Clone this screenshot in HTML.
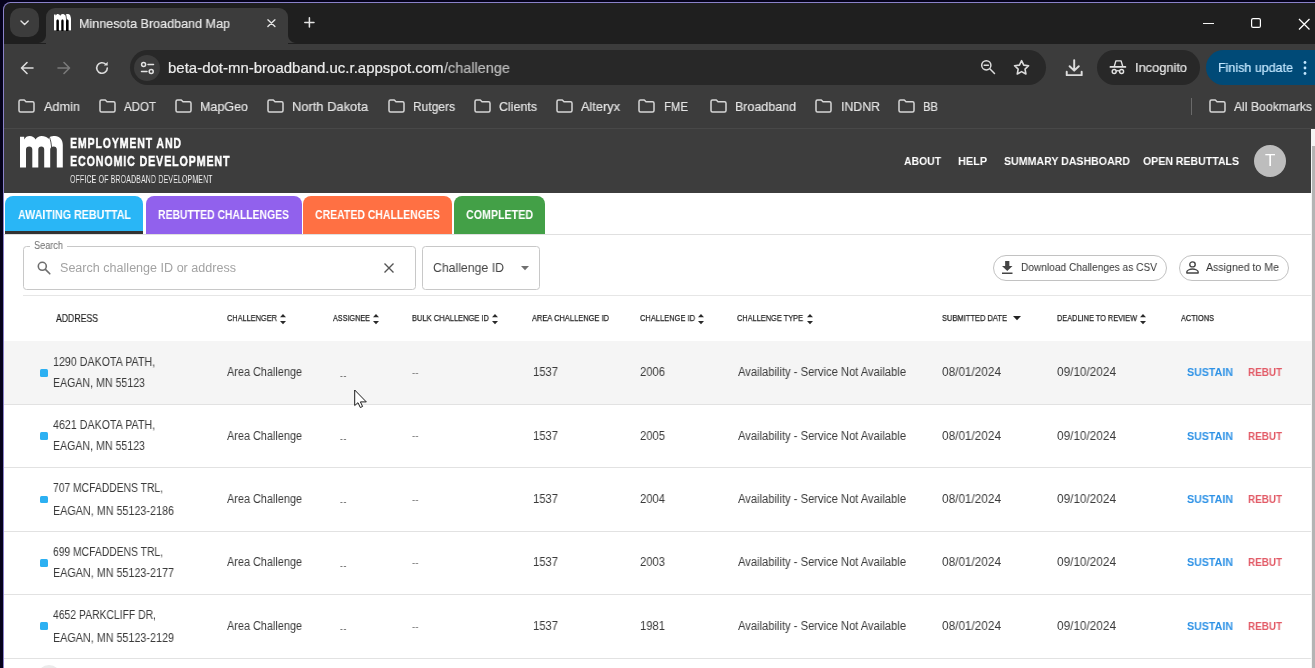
<!DOCTYPE html>
<html><head><meta charset="utf-8"><title>Minnesota Broadband Map</title>
<style>
html,body{margin:0;padding:0;}
body{width:1315px;height:668px;overflow:hidden;position:relative;background:#05021c;font-family:"Liberation Sans", sans-serif;}
.t{position:absolute;white-space:pre;transform-origin:0 50%;font-family:"Liberation Sans", sans-serif;will-change:transform;}
.a{position:absolute;}
svg{position:absolute;overflow:visible;}
</style></head><body>
<div class="a" style="left:3px;top:2px;width:1320px;height:700px;background:#8a82ca;border-radius:7.500px 0 0 0;"></div>
<div class="a" style="left:4px;top:3px;width:1320px;height:700px;background:#1f1f1f;border-radius:6.500px 0 0 0;"></div>
<div class="a" style="left:10px;top:8px;width:29px;height:29px;background:#3c3c3c;border-radius:10px;"></div>
<svg style="left:20.200px;top:20px" width="9.200" height="5.900" viewBox="0 0 11 7"><path d="M1.2 1.2 L5.5 5.3 L9.8 1.2" fill="none" stroke="#e3e3e3" stroke-width="1.7" stroke-linecap="round" stroke-linejoin="round"/></svg>
<div class="a" style="left:46px;top:8px;width:242px;height:36px;background:#3c3c3c;border-radius:9px 9px 0 0;"></div>
<div class="a" style="left:4px;top:43.5px;width:1320px;height:85px;background:#3c3c3c;"></div>
<div class="a" style="left:54px;top:16px;width:17px;height:15px;background:#000;"></div>
<svg style="left:54px;top:14px" width="17" height="16.5" viewBox="0 0 42.800 31.400" preserveAspectRatio="none"><path d="M0 31.400V.8H4.200V3.400C5.400 1.200 7.300 0 9.700 0C12.300 0 14.400 1.300 15.600 3.600C16.800 1.300 19 0 21.700 0C24.500 0 26.800 1 28.500 2.800L29.800 1C31 .3 33 0 35 0C39.500 0 42.800 3.500 42.800 9V31.400H36.800V13.600C36.800 11.600 35.600 10.400 33.600 10.400C31.600 10.400 30.200 11.600 30.200 13.600V31.400H24.200V13.600C24.200 11.600 23.200 10.400 21.300 10.400C19.400 10.400 18.300 11.600 18.300 13.600V31.400H12.300V13.600C12.300 11.600 11.200 10.400 9.200 10.400C7.200 10.400 6 11.600 6 13.600V31.400Z" fill="#fff"/><path d="M29.500 1.200C30.600 4 31.400 8 31.600 11.800" fill="none" stroke="#000" stroke-width="1.400"/></svg>
<div class="a" style="left:38px;top:35px;width:8px;height:8px;background:radial-gradient(circle at 0 0, rgba(60,60,60,0) 7.500px, #3c3c3c 8.500px);"></div>
<div class="a" style="left:288px;top:35px;width:8px;height:8px;background:radial-gradient(circle at 100% 0, rgba(60,60,60,0) 7.500px, #3c3c3c 8.500px);"></div>
<svg style="left:267.400px;top:18.700px" width="8.800" height="8.400" viewBox="0 0 10 10" preserveAspectRatio="none"><path d="M1 1L9 9M9 1L1 9" stroke="#e3e3e3" stroke-width="1.600" stroke-linecap="round"/></svg>
<svg style="left:304px;top:17.400px" width="10.800" height="10.800" viewBox="0 0 12 12"><path d="M6 .9V11.100M.9 6H11.100" stroke="#e3e3e3" stroke-width="1.700" stroke-linecap="round"/></svg>
<div class="a" style="left:1203px;top:23px;width:11px;height:1.2px;background:#f4f4f4;"></div>
<svg style="left:1251px;top:18.400px" width="10" height="10" viewBox="0 0 10 10"><rect x=".6" y=".6" width="8.8" height="8.8" rx="1.5" fill="none" stroke="#fff" stroke-width="1.2"/></svg>
<svg style="left:1299px;top:18.500px" width="10.500" height="10.500" viewBox="0 0 10 10"><path d="M0 0L10 10M10 0L0 10" stroke="#fff" stroke-width="1.2"/></svg>
<svg style="left:20px;top:61px" width="14" height="14" viewBox="0 0 14 14"><path d="M13 7H1.800M7 1.500L1.500 7L7 12.500" fill="none" stroke="#dcdcdc" stroke-width="1.600" stroke-linecap="round" stroke-linejoin="round"/></svg>
<svg style="left:57px;top:61px" width="14" height="14" viewBox="0 0 14 14"><path d="M1 7H12.200M7 1.500L12.500 7L7 12.500" fill="none" stroke="#7a7a7a" stroke-width="1.600" stroke-linecap="round" stroke-linejoin="round"/></svg>
<svg style="left:95px;top:61px" width="14" height="14" viewBox="0 0 14 14"><path d="M12.300 7A5.300 5.300 0 1 1 10.700 3.200" fill="none" stroke="#dcdcdc" stroke-width="1.600" stroke-linecap="round"/><path d="M12.700 .8V4.600H8.900z" fill="#dcdcdc"/></svg>
<div class="a" style="left:130px;top:50px;width:916px;height:35px;background:#282828;border-radius:17.5px;"></div>
<div class="a" style="left:134.4px;top:55px;width:25.6px;height:25.6px;background:#3c3c3c;border-radius:13px;"></div>
<svg style="left:139.600px;top:61px" width="15" height="14" viewBox="0 0 15 14"><g fill="none" stroke="#e3e3e3" stroke-width="1.500" stroke-linecap="round"><circle cx="3.600" cy="3.500" r="2"/><path d="M8 3.500H13.500"/><circle cx="11.200" cy="10.500" r="2"/><path d="M1.500 10.500H7"/></g></svg>
<svg style="left:980px;top:59.200px" width="16" height="16" viewBox="0 0 16 16"><g fill="none" stroke="#dcdcdc" stroke-width="1.500" stroke-linecap="round"><circle cx="6.300" cy="6.300" r="4.600"/><path d="M9.800 9.800L14.500 14.500M4.200 6.300H8.400"/></g></svg>
<svg style="left:1012.200px;top:57.600px" width="19.200" height="19.200" viewBox="0 0 24 24"><path d="M12 3.300l2.700 5.600 6.100 .8-4.500 4.200 1.100 6.100L12 17l-5.400 3 1.100-6.100L3.200 9.700l6.100-.8z" fill="none" stroke="#dcdcdc" stroke-width="2" stroke-linejoin="round"/></svg>
<svg style="left:1064.800px;top:58.600px" width="18.400" height="17.800" viewBox="0 0 16 16" preserveAspectRatio="none"><g fill="none" stroke="#dcdcdc" stroke-width="1.700" stroke-linecap="round" stroke-linejoin="round"><path d="M8 1V10M4 6.500L8 10.500L12 6.500M1.500 11.500V14.500H14.500V11.500"/></g></svg>
<div class="a" style="left:1097px;top:50px;width:103px;height:35px;background:#282828;border-radius:17.5px;"></div>
<svg style="left:1109px;top:59px" width="18" height="17" viewBox="0 0 18 17"><g fill="none" stroke="#e3e3e3" stroke-linecap="round" stroke-linejoin="round"><path d="M1.400 7.900H16.400" stroke-width="1.700"/><path d="M5.300 7.400L6.900 1.900H12.100L13.700 7.400" stroke-width="1.400"/><circle cx="5.200" cy="12.500" r="2" stroke-width="1.400"/><circle cx="12.600" cy="12.500" r="2" stroke-width="1.400"/><path d="M7.200 12.100Q8.900 11.300 10.600 12.100" stroke-width="1.200"/></g></svg>
<div class="a" style="left:1206px;top:50px;width:130px;height:35px;background:#004a77;border-radius:17.5px;"></div>
<svg style="left:1303px;top:60px" width="4" height="16" viewBox="0 0 4 16"><g fill="#c2e7ff"><circle cx="2" cy="2.500" r="1.400"/><circle cx="2" cy="8" r="1.400"/><circle cx="2" cy="13.500" r="1.400"/></g></svg>
<svg style="left:18.3px;top:99px" width="17" height="14" viewBox="0 0 17 14"><path d="M1 2.500Q1 1 2.500 1H6.300L8 2.800H14.500Q16 2.800 16 4.300V11.500Q16 13 14.500 13H2.500Q1 13 1 11.500Z" fill="none" stroke="#d6d6d6" stroke-width="1.500" stroke-linejoin="round"/></svg>
<svg style="left:99px;top:99px" width="17" height="14" viewBox="0 0 17 14"><path d="M1 2.500Q1 1 2.500 1H6.300L8 2.800H14.500Q16 2.800 16 4.300V11.500Q16 13 14.500 13H2.500Q1 13 1 11.500Z" fill="none" stroke="#d6d6d6" stroke-width="1.500" stroke-linejoin="round"/></svg>
<svg style="left:175px;top:99px" width="17" height="14" viewBox="0 0 17 14"><path d="M1 2.500Q1 1 2.500 1H6.300L8 2.800H14.500Q16 2.800 16 4.300V11.500Q16 13 14.500 13H2.500Q1 13 1 11.500Z" fill="none" stroke="#d6d6d6" stroke-width="1.500" stroke-linejoin="round"/></svg>
<svg style="left:267px;top:99px" width="17" height="14" viewBox="0 0 17 14"><path d="M1 2.500Q1 1 2.500 1H6.300L8 2.800H14.500Q16 2.800 16 4.300V11.500Q16 13 14.500 13H2.500Q1 13 1 11.500Z" fill="none" stroke="#d6d6d6" stroke-width="1.500" stroke-linejoin="round"/></svg>
<svg style="left:388px;top:99px" width="17" height="14" viewBox="0 0 17 14"><path d="M1 2.500Q1 1 2.500 1H6.300L8 2.800H14.500Q16 2.800 16 4.300V11.500Q16 13 14.500 13H2.500Q1 13 1 11.500Z" fill="none" stroke="#d6d6d6" stroke-width="1.500" stroke-linejoin="round"/></svg>
<svg style="left:474px;top:99px" width="17" height="14" viewBox="0 0 17 14"><path d="M1 2.500Q1 1 2.500 1H6.300L8 2.800H14.500Q16 2.800 16 4.300V11.500Q16 13 14.500 13H2.500Q1 13 1 11.500Z" fill="none" stroke="#d6d6d6" stroke-width="1.500" stroke-linejoin="round"/></svg>
<svg style="left:556px;top:99px" width="17" height="14" viewBox="0 0 17 14"><path d="M1 2.500Q1 1 2.500 1H6.300L8 2.800H14.500Q16 2.800 16 4.300V11.500Q16 13 14.500 13H2.500Q1 13 1 11.500Z" fill="none" stroke="#d6d6d6" stroke-width="1.500" stroke-linejoin="round"/></svg>
<svg style="left:638px;top:99px" width="17" height="14" viewBox="0 0 17 14"><path d="M1 2.500Q1 1 2.500 1H6.300L8 2.800H14.500Q16 2.800 16 4.300V11.500Q16 13 14.500 13H2.500Q1 13 1 11.500Z" fill="none" stroke="#d6d6d6" stroke-width="1.500" stroke-linejoin="round"/></svg>
<svg style="left:710px;top:99px" width="17" height="14" viewBox="0 0 17 14"><path d="M1 2.500Q1 1 2.500 1H6.300L8 2.800H14.500Q16 2.800 16 4.300V11.500Q16 13 14.500 13H2.500Q1 13 1 11.500Z" fill="none" stroke="#d6d6d6" stroke-width="1.500" stroke-linejoin="round"/></svg>
<svg style="left:815px;top:99px" width="17" height="14" viewBox="0 0 17 14"><path d="M1 2.500Q1 1 2.500 1H6.300L8 2.800H14.500Q16 2.800 16 4.300V11.500Q16 13 14.500 13H2.500Q1 13 1 11.500Z" fill="none" stroke="#d6d6d6" stroke-width="1.500" stroke-linejoin="round"/></svg>
<svg style="left:898px;top:99px" width="17" height="14" viewBox="0 0 17 14"><path d="M1 2.500Q1 1 2.500 1H6.300L8 2.800H14.500Q16 2.800 16 4.300V11.500Q16 13 14.500 13H2.500Q1 13 1 11.500Z" fill="none" stroke="#d6d6d6" stroke-width="1.500" stroke-linejoin="round"/></svg>
<svg style="left:1209px;top:99px" width="17" height="14" viewBox="0 0 17 14"><path d="M1 2.500Q1 1 2.500 1H6.300L8 2.800H14.500Q16 2.800 16 4.300V11.500Q16 13 14.500 13H2.500Q1 13 1 11.500Z" fill="none" stroke="#d6d6d6" stroke-width="1.500" stroke-linejoin="round"/></svg>
<div class="a" style="left:1190.5px;top:98px;width:1px;height:16.5px;background:#6a6a6a;"></div>
<div class="a" style="left:4px;top:128px;width:1320px;height:1px;background:#484848;"></div>
<div class="a" style="left:4px;top:129px;width:1307px;height:600px;background:#fff;"></div>
<div class="a" style="left:4px;top:129px;width:1307px;height:64px;background:#3d3d3d;"></div>
<div class="a" style="left:1311px;top:129px;width:4px;height:600px;background:#f4f4f4;"></div>
<div class="a" style="left:1312px;top:146px;width:4px;height:600px;background:#b4b4b4;"></div>
<svg style="left:20px;top:136.300px" width="42.800" height="31.400" viewBox="0 0 42.800 31.400"><path d="M0 31.400V.8H4.200V3.400C5.400 1.200 7.300 0 9.700 0C12.300 0 14.400 1.300 15.600 3.600C16.800 1.300 19 0 21.700 0C24.500 0 26.800 1 28.500 2.800L29.800 1C31 .3 33 0 35 0C39.500 0 42.800 3.500 42.800 9V31.400H36.800V13.600C36.800 11.600 35.600 10.400 33.600 10.400C31.600 10.400 30.200 11.600 30.200 13.600V31.400H24.200V13.600C24.200 11.600 23.200 10.400 21.300 10.400C19.400 10.400 18.300 11.600 18.300 13.600V31.400H12.300V13.600C12.300 11.600 11.200 10.400 9.200 10.400C7.200 10.400 6 11.600 6 13.600V31.400Z" fill="#fff"/><path d="M29.500 1.200C30.600 4 31.400 8 31.600 11.800" fill="none" stroke="#3d3d3d" stroke-width=".9"/></svg>
<div class="a" style="left:1254px;top:145.3px;width:32px;height:32px;background:#bdbdbd;border-radius:16px;"></div>
<div class="a" style="left:4px;top:234px;width:1307px;height:1px;background:#e0e0e0;"></div>
<div class="a" style="left:5px;top:196px;width:138px;height:38px;background:#29b6f6;border-radius:8px 8px 0 0;"></div>
<div class="a" style="left:5px;top:231px;width:138px;height:3px;background:#333;"></div>
<div class="a" style="left:146px;top:196px;width:156px;height:38px;background:#9161ed;border-radius:8px 8px 0 0;"></div>
<div class="a" style="left:303px;top:196px;width:149px;height:38px;background:#ff7043;border-radius:8px 8px 0 0;"></div>
<div class="a" style="left:454px;top:196px;width:91px;height:38px;background:#43a047;border-radius:8px 8px 0 0;"></div>
<div class="a" style="left:23px;top:246px;width:393px;height:44px;border:1px solid #c8c8c8;border-radius:3.5px;box-sizing:border-box;"></div>
<div class="a" style="left:30px;top:244px;width:37px;height:5px;background:#fff;"></div>
<svg style="left:37px;top:261px" width="14" height="14" viewBox="0 0 14 14"><g fill="none" stroke="#6e6e6e" stroke-width="1.600" stroke-linecap="round"><circle cx="5.300" cy="5.300" r="4"/><path d="M8.400 8.400L12.800 12.800"/></g></svg>
<svg style="left:384px;top:263px" width="10" height="10" viewBox="0 0 10 10"><path d="M.5 .5L9.500 9.500M9.500 .5L.5 9.500" stroke="#555" stroke-width="1.400"/></svg>
<div class="a" style="left:422px;top:246px;width:118px;height:44px;border:1px solid #c8c8c8;border-radius:3.5px;box-sizing:border-box;"></div>
<svg style="left:521px;top:265.800px" width="8" height="4.200" viewBox="0 0 9 5" preserveAspectRatio="none"><path d="M0 0H9L4.500 5z" fill="#707070"/></svg>
<div class="a" style="left:993px;top:255px;width:174px;height:26px;border:1px solid #c2c2c2;border-radius:13px;box-sizing:border-box;"></div>
<svg style="left:1002px;top:260.500px" width="10.500" height="13" viewBox="0 0 10 12" preserveAspectRatio="none"><path d="M3 0H7V4.500H10L5 9.200L0 4.500H3zM0 10.500H10V12H0z" fill="#444"/></svg>
<div class="a" style="left:1179px;top:255px;width:110px;height:26px;border:1px solid #c2c2c2;border-radius:13px;box-sizing:border-box;"></div>
<svg style="left:1185.800px;top:261.400px" width="13" height="13" viewBox="0 0 12 13" preserveAspectRatio="none"><g fill="none" stroke="#444" stroke-width="1.300"><circle cx="6" cy="3.400" r="2.500"/><path d="M.8 12V10.800C.8 9 4 8 6 8s5.200 1 5.200 2.800V12z" stroke-linejoin="round"/></g></svg>
<div class="a" style="left:23px;top:295px;width:1288px;height:1px;background:#e6e6e6;"></div>
<svg style="left:280px;top:313.6px" width="6" height="10.200" viewBox="0 0 6 10.200"><path d="M0 3.300L3 0L6 3.300zM0 7.100L3 10.200L6 7.100z" fill="#2a2a2a"/></svg>
<svg style="left:373px;top:313.6px" width="6" height="10.200" viewBox="0 0 6 10.200"><path d="M0 3.300L3 0L6 3.300zM0 7.100L3 10.200L6 7.100z" fill="#2a2a2a"/></svg>
<svg style="left:492px;top:313.6px" width="6" height="10.200" viewBox="0 0 6 10.200"><path d="M0 3.300L3 0L6 3.300zM0 7.100L3 10.200L6 7.100z" fill="#2a2a2a"/></svg>
<svg style="left:698px;top:313.6px" width="6" height="10.200" viewBox="0 0 6 10.200"><path d="M0 3.300L3 0L6 3.300zM0 7.100L3 10.200L6 7.100z" fill="#2a2a2a"/></svg>
<svg style="left:807.3px;top:313.6px" width="6" height="10.200" viewBox="0 0 6 10.200"><path d="M0 3.300L3 0L6 3.300zM0 7.100L3 10.200L6 7.100z" fill="#2a2a2a"/></svg>
<svg style="left:1140px;top:313.6px" width="6" height="10.200" viewBox="0 0 6 10.200"><path d="M0 3.300L3 0L6 3.300zM0 7.100L3 10.200L6 7.100z" fill="#2a2a2a"/></svg>
<svg style="left:1012.500px;top:316.200px" width="8" height="4.200" viewBox="0 0 9 5" preserveAspectRatio="none"><path d="M0 0H9L4.500 5z" fill="#222"/></svg>
<div class="a" style="left:4px;top:341px;width:1307px;height:63px;background:#f5f5f5;"></div>
<div class="a" style="left:4px;top:404px;width:1307px;height:1px;background:#e2e2e2;"></div>
<div class="a" style="left:40.3px;top:369.0px;width:7.5px;height:7.6px;background:#2cb0f2;border-radius:1.5px;"></div>
<div class="a" style="left:4px;top:467px;width:1307px;height:1px;background:#e2e2e2;"></div>
<div class="a" style="left:40.3px;top:432.3px;width:7.5px;height:7.6px;background:#2cb0f2;border-radius:1.5px;"></div>
<div class="a" style="left:4px;top:531px;width:1307px;height:1px;background:#e2e2e2;"></div>
<div class="a" style="left:40.3px;top:495.7px;width:7.5px;height:7.6px;background:#2cb0f2;border-radius:1.5px;"></div>
<div class="a" style="left:4px;top:594px;width:1307px;height:1px;background:#e2e2e2;"></div>
<div class="a" style="left:40.3px;top:559.0px;width:7.5px;height:7.6px;background:#2cb0f2;border-radius:1.5px;"></div>
<div class="a" style="left:4px;top:658px;width:1307px;height:1px;background:#e2e2e2;"></div>
<div class="a" style="left:40.3px;top:622.4000000000001px;width:7.5px;height:7.6px;background:#2cb0f2;border-radius:1.5px;"></div>
<div class="a" style="left:37px;top:665px;width:24px;height:24px;background:#ebebeb;border-radius:12px;"></div>
<span class="t" style="left:79px;top:14.50px;font-size:13.3px;line-height:17px;font-weight:400;color:#e8e8e8;transform:scaleX(0.9457);-webkit-text-stroke:.2px currentColor;">Minnesota Broadband Map</span>
<span class="t" style="left:168px;top:58.50px;font-size:14.8px;line-height:19px;font-weight:400;color:#ececec;transform:scaleX(1.0122);-webkit-text-stroke:.2px currentColor;">beta-dot-mn-broadband.uc.r.appspot.com</span>
<span class="t" style="left:444.1px;top:58.50px;font-size:14.8px;line-height:19px;font-weight:400;color:#bcbcbc;transform:scaleX(0.9767);-webkit-text-stroke:.2px currentColor;">/challenge</span>
<span class="t" style="left:1135px;top:59.30px;font-size:13.3px;line-height:17px;font-weight:400;color:#e8e8e8;transform:scaleX(0.9635);-webkit-text-stroke:.2px currentColor;">Incognito</span>
<span class="t" style="left:1218px;top:59.30px;font-size:13.3px;line-height:17px;font-weight:400;color:#c2e7ff;transform:scaleX(0.9393);-webkit-text-stroke:.2px currentColor;">Finish update</span>
<span class="t" style="left:44px;top:97.50px;font-size:13.3px;line-height:17px;font-weight:400;color:#e3e3e3;transform:scaleX(0.9548);-webkit-text-stroke:.2px currentColor;">Admin</span>
<span class="t" style="left:124px;top:97.50px;font-size:13.3px;line-height:17px;font-weight:400;color:#e3e3e3;transform:scaleX(0.8663);-webkit-text-stroke:.2px currentColor;">ADOT</span>
<span class="t" style="left:200px;top:97.50px;font-size:13.3px;line-height:17px;font-weight:400;color:#e3e3e3;transform:scaleX(0.9412);-webkit-text-stroke:.2px currentColor;">MapGeo</span>
<span class="t" style="left:292px;top:97.50px;font-size:13.3px;line-height:17px;font-weight:400;color:#e3e3e3;transform:scaleX(0.9701);-webkit-text-stroke:.2px currentColor;">North Dakota</span>
<span class="t" style="left:413px;top:97.50px;font-size:13.3px;line-height:17px;font-weight:400;color:#e3e3e3;transform:scaleX(0.9020);-webkit-text-stroke:.2px currentColor;">Rutgers</span>
<span class="t" style="left:499px;top:97.50px;font-size:13.3px;line-height:17px;font-weight:400;color:#e3e3e3;transform:scaleX(0.9347);-webkit-text-stroke:.2px currentColor;">Clients</span>
<span class="t" style="left:581px;top:97.50px;font-size:13.3px;line-height:17px;font-weight:400;color:#e3e3e3;transform:scaleX(0.9596);-webkit-text-stroke:.2px currentColor;">Alteryx</span>
<span class="t" style="left:664px;top:97.50px;font-size:13.3px;line-height:17px;font-weight:400;color:#e3e3e3;transform:scaleX(0.8548);-webkit-text-stroke:.2px currentColor;">FME</span>
<span class="t" style="left:735px;top:97.50px;font-size:13.3px;line-height:17px;font-weight:400;color:#e3e3e3;transform:scaleX(0.9373);-webkit-text-stroke:.2px currentColor;">Broadband</span>
<span class="t" style="left:841px;top:97.50px;font-size:13.3px;line-height:17px;font-weight:400;color:#e3e3e3;transform:scaleX(0.9262);-webkit-text-stroke:.2px currentColor;">INDNR</span>
<span class="t" style="left:923px;top:97.50px;font-size:13.3px;line-height:17px;font-weight:400;color:#e3e3e3;transform:scaleX(0.8451);-webkit-text-stroke:.2px currentColor;">BB</span>
<span class="t" style="left:1234px;top:97.50px;font-size:13.3px;line-height:17px;font-weight:400;color:#e3e3e3;transform:scaleX(0.9178);-webkit-text-stroke:.2px currentColor;">All Bookmarks</span>
<span class="t" style="left:69.5px;top:133.00px;font-size:15.2px;line-height:20px;font-weight:700;color:#fff;letter-spacing:1.2px;transform:scaleX(0.6967);-webkit-text-stroke:.45px #fff;">EMPLOYMENT AND</span>
<span class="t" style="left:69.5px;top:151.20px;font-size:15.2px;line-height:20px;font-weight:700;color:#fff;letter-spacing:1.2px;transform:scaleX(0.7053);-webkit-text-stroke:.45px #fff;">ECONOMIC DEVELOPMENT</span>
<span class="t" style="left:69.5px;top:172.30px;font-size:10.6px;line-height:14px;font-weight:400;color:#f0f0f0;letter-spacing:0.3px;transform:scaleX(0.6520);">OFFICE OF BROADBAND DEVELOPMENT</span>
<span class="t" style="left:904px;top:152.70px;font-size:11.7px;line-height:15px;font-weight:700;color:#fff;transform:scaleX(0.8902);">ABOUT</span>
<span class="t" style="left:958px;top:152.70px;font-size:11.7px;line-height:15px;font-weight:700;color:#fff;transform:scaleX(0.9303);">HELP</span>
<span class="t" style="left:1004px;top:152.70px;font-size:11.7px;line-height:15px;font-weight:700;color:#fff;transform:scaleX(0.9067);">SUMMARY DASHBOARD</span>
<span class="t" style="left:1143px;top:152.70px;font-size:11.7px;line-height:15px;font-weight:700;color:#fff;transform:scaleX(0.9033);">OPEN REBUTTALS</span>
<span class="t" style="left:1265px;top:150.00px;font-size:17px;line-height:22px;font-weight:400;color:#fff;transform:scaleX(0.9624);">T</span>
<span class="t" style="left:18px;top:206.50px;font-size:12px;line-height:16px;font-weight:700;color:#fff;transform:scaleX(0.8937);">AWAITING REBUTTAL</span>
<span class="t" style="left:158px;top:206.50px;font-size:12px;line-height:16px;font-weight:700;color:#fff;transform:scaleX(0.8656);">REBUTTED CHALLENGES</span>
<span class="t" style="left:315px;top:206.50px;font-size:12px;line-height:16px;font-weight:700;color:#fff;transform:scaleX(0.8734);">CREATED CHALLENGES</span>
<span class="t" style="left:466px;top:206.50px;font-size:12px;line-height:16px;font-weight:700;color:#fff;transform:scaleX(0.8893);">COMPLETED</span>
<span class="t" style="left:34px;top:238.50px;font-size:10px;line-height:13px;font-weight:400;color:#6b6b6b;transform:scaleX(0.9152);">Search</span>
<span class="t" style="left:60px;top:260.00px;font-size:12.5px;line-height:16px;font-weight:400;color:#a3a3a3;transform:scaleX(1.0051);">Search challenge ID or address</span>
<span class="t" style="left:433px;top:259.00px;font-size:13px;line-height:17px;font-weight:400;color:#444;transform:scaleX(0.9447);">Challenge ID</span>
<span class="t" style="left:1021px;top:259.60px;font-size:11px;line-height:14px;font-weight:400;color:#333;transform:scaleX(0.9228);">Download Challenges as CSV</span>
<span class="t" style="left:1206px;top:259.60px;font-size:11px;line-height:14px;font-weight:400;color:#333;transform:scaleX(0.9627);">Assigned to Me</span>
<span class="t" style="left:56px;top:311.30px;font-size:10.5px;line-height:14px;font-weight:400;color:#1f1f1f;transform:scaleX(0.8273);-webkit-text-stroke:.2px #1f1f1f;">ADDRESS</span>
<span class="t" style="left:227px;top:313.10px;font-size:8.8px;line-height:11px;font-weight:400;color:#262626;transform:scaleX(0.8381);-webkit-text-stroke:.25px #262626;">CHALLENGER</span>
<span class="t" style="left:333px;top:313.10px;font-size:8.8px;line-height:11px;font-weight:400;color:#262626;transform:scaleX(0.8225);-webkit-text-stroke:.25px #262626;">ASSIGNEE</span>
<span class="t" style="left:412px;top:313.10px;font-size:8.8px;line-height:11px;font-weight:400;color:#262626;transform:scaleX(0.8559);-webkit-text-stroke:.25px #262626;">BULK CHALLENGE ID</span>
<span class="t" style="left:532px;top:313.10px;font-size:8.8px;line-height:11px;font-weight:400;color:#262626;transform:scaleX(0.8513);-webkit-text-stroke:.25px #262626;">AREA CHALLENGE ID</span>
<span class="t" style="left:640px;top:313.10px;font-size:8.8px;line-height:11px;font-weight:400;color:#262626;transform:scaleX(0.8523);-webkit-text-stroke:.25px #262626;">CHALLENGE ID</span>
<span class="t" style="left:737px;top:313.10px;font-size:8.8px;line-height:11px;font-weight:400;color:#262626;transform:scaleX(0.8401);-webkit-text-stroke:.25px #262626;">CHALLENGE TYPE</span>
<span class="t" style="left:942px;top:313.10px;font-size:8.8px;line-height:11px;font-weight:400;color:#262626;transform:scaleX(0.8542);-webkit-text-stroke:.25px #262626;">SUBMITTED DATE</span>
<span class="t" style="left:1057px;top:313.10px;font-size:8.8px;line-height:11px;font-weight:400;color:#262626;transform:scaleX(0.8377);-webkit-text-stroke:.25px #262626;">DEADLINE TO REVIEW</span>
<span class="t" style="left:1181px;top:313.10px;font-size:8.8px;line-height:11px;font-weight:400;color:#262626;transform:scaleX(0.8438);-webkit-text-stroke:.25px #262626;">ACTIONS</span>
<span class="t" style="left:53px;top:353.50px;font-size:12px;line-height:16px;font-weight:400;color:#3a3a3a;transform:scaleX(0.8891);">1290 DAKOTA PATH,</span>
<span class="t" style="left:53px;top:374.70px;font-size:12px;line-height:16px;font-weight:400;color:#3a3a3a;transform:scaleX(0.8842);">EAGAN, MN 55123</span>
<span class="t" style="left:227px;top:364.40px;font-size:12px;line-height:16px;font-weight:400;color:#3a3a3a;transform:scaleX(0.9065);">Area Challenge</span>
<span class="t" style="left:339.5px;top:368.50px;font-size:10px;line-height:13px;font-weight:400;color:#666;letter-spacing:0.8px;transform:scaleX(0.8305);">--</span>
<span class="t" style="left:412px;top:365.10px;font-size:11px;line-height:14px;font-weight:400;color:#777;transform:scaleX(0.8870);">--</span>
<span class="t" style="left:533px;top:364.40px;font-size:12px;line-height:16px;font-weight:400;color:#3a3a3a;transform:scaleX(0.9362);">1537</span>
<span class="t" style="left:640px;top:364.40px;font-size:12px;line-height:16px;font-weight:400;color:#3a3a3a;transform:scaleX(0.9362);">2006</span>
<span class="t" style="left:738px;top:364.40px;font-size:12px;line-height:16px;font-weight:400;color:#3a3a3a;transform:scaleX(0.9317);">Availability - Service Not Available</span>
<span class="t" style="left:942px;top:364.40px;font-size:12px;line-height:16px;font-weight:400;color:#3a3a3a;transform:scaleX(0.9823);">08/01/2024</span>
<span class="t" style="left:1057px;top:364.40px;font-size:12px;line-height:16px;font-weight:400;color:#3a3a3a;transform:scaleX(0.9823);">09/10/2024</span>
<span class="t" style="left:1187px;top:365.40px;font-size:11px;line-height:14px;font-weight:700;color:#2e92e6;transform:scaleX(0.9691);">SUSTAIN</span>
<span class="t" style="left:1248px;top:365.40px;font-size:11px;line-height:14px;font-weight:700;color:#e25a66;transform:scaleX(0.8973);">REBUT</span>
<span class="t" style="left:53px;top:416.60px;font-size:12px;line-height:16px;font-weight:400;color:#3a3a3a;transform:scaleX(0.8891);">4621 DAKOTA PATH,</span>
<span class="t" style="left:53px;top:438.40px;font-size:12px;line-height:16px;font-weight:400;color:#3a3a3a;transform:scaleX(0.8842);">EAGAN, MN 55123</span>
<span class="t" style="left:227px;top:427.70px;font-size:12px;line-height:16px;font-weight:400;color:#3a3a3a;transform:scaleX(0.9065);">Area Challenge</span>
<span class="t" style="left:339.5px;top:431.80px;font-size:10px;line-height:13px;font-weight:400;color:#666;letter-spacing:0.8px;transform:scaleX(0.8305);">--</span>
<span class="t" style="left:412px;top:428.40px;font-size:11px;line-height:14px;font-weight:400;color:#777;transform:scaleX(0.8870);">--</span>
<span class="t" style="left:533px;top:427.70px;font-size:12px;line-height:16px;font-weight:400;color:#3a3a3a;transform:scaleX(0.9362);">1537</span>
<span class="t" style="left:640px;top:427.70px;font-size:12px;line-height:16px;font-weight:400;color:#3a3a3a;transform:scaleX(0.9362);">2005</span>
<span class="t" style="left:738px;top:427.70px;font-size:12px;line-height:16px;font-weight:400;color:#3a3a3a;transform:scaleX(0.9317);">Availability - Service Not Available</span>
<span class="t" style="left:942px;top:427.70px;font-size:12px;line-height:16px;font-weight:400;color:#3a3a3a;transform:scaleX(0.9823);">08/01/2024</span>
<span class="t" style="left:1057px;top:427.70px;font-size:12px;line-height:16px;font-weight:400;color:#3a3a3a;transform:scaleX(0.9823);">09/10/2024</span>
<span class="t" style="left:1187px;top:428.70px;font-size:11px;line-height:14px;font-weight:700;color:#2e92e6;transform:scaleX(0.9691);">SUSTAIN</span>
<span class="t" style="left:1248px;top:428.70px;font-size:11px;line-height:14px;font-weight:700;color:#e25a66;transform:scaleX(0.8973);">REBUT</span>
<span class="t" style="left:53px;top:480.40px;font-size:12px;line-height:16px;font-weight:400;color:#3a3a3a;transform:scaleX(0.8605);">707 MCFADDENS TRL,</span>
<span class="t" style="left:53px;top:502.60px;font-size:12px;line-height:16px;font-weight:400;color:#3a3a3a;transform:scaleX(0.8980);">EAGAN, MN 55123-2186</span>
<span class="t" style="left:227px;top:491.10px;font-size:12px;line-height:16px;font-weight:400;color:#3a3a3a;transform:scaleX(0.9065);">Area Challenge</span>
<span class="t" style="left:339.5px;top:495.20px;font-size:10px;line-height:13px;font-weight:400;color:#666;letter-spacing:0.8px;transform:scaleX(0.8305);">--</span>
<span class="t" style="left:412px;top:491.80px;font-size:11px;line-height:14px;font-weight:400;color:#777;transform:scaleX(0.8870);">--</span>
<span class="t" style="left:533px;top:491.10px;font-size:12px;line-height:16px;font-weight:400;color:#3a3a3a;transform:scaleX(0.9362);">1537</span>
<span class="t" style="left:640px;top:491.10px;font-size:12px;line-height:16px;font-weight:400;color:#3a3a3a;transform:scaleX(0.9362);">2004</span>
<span class="t" style="left:738px;top:491.10px;font-size:12px;line-height:16px;font-weight:400;color:#3a3a3a;transform:scaleX(0.9317);">Availability - Service Not Available</span>
<span class="t" style="left:942px;top:491.10px;font-size:12px;line-height:16px;font-weight:400;color:#3a3a3a;transform:scaleX(0.9823);">08/01/2024</span>
<span class="t" style="left:1057px;top:491.10px;font-size:12px;line-height:16px;font-weight:400;color:#3a3a3a;transform:scaleX(0.9823);">09/10/2024</span>
<span class="t" style="left:1187px;top:492.10px;font-size:11px;line-height:14px;font-weight:700;color:#2e92e6;transform:scaleX(0.9691);">SUSTAIN</span>
<span class="t" style="left:1248px;top:492.10px;font-size:11px;line-height:14px;font-weight:700;color:#e25a66;transform:scaleX(0.8973);">REBUT</span>
<span class="t" style="left:53px;top:543.70px;font-size:12px;line-height:16px;font-weight:400;color:#3a3a3a;transform:scaleX(0.8605);">699 MCFADDENS TRL,</span>
<span class="t" style="left:53px;top:565.40px;font-size:12px;line-height:16px;font-weight:400;color:#3a3a3a;transform:scaleX(0.8980);">EAGAN, MN 55123-2177</span>
<span class="t" style="left:227px;top:554.40px;font-size:12px;line-height:16px;font-weight:400;color:#3a3a3a;transform:scaleX(0.9065);">Area Challenge</span>
<span class="t" style="left:339.5px;top:558.50px;font-size:10px;line-height:13px;font-weight:400;color:#666;letter-spacing:0.8px;transform:scaleX(0.8305);">--</span>
<span class="t" style="left:412px;top:555.10px;font-size:11px;line-height:14px;font-weight:400;color:#777;transform:scaleX(0.8870);">--</span>
<span class="t" style="left:533px;top:554.40px;font-size:12px;line-height:16px;font-weight:400;color:#3a3a3a;transform:scaleX(0.9362);">1537</span>
<span class="t" style="left:640px;top:554.40px;font-size:12px;line-height:16px;font-weight:400;color:#3a3a3a;transform:scaleX(0.9362);">2003</span>
<span class="t" style="left:738px;top:554.40px;font-size:12px;line-height:16px;font-weight:400;color:#3a3a3a;transform:scaleX(0.9317);">Availability - Service Not Available</span>
<span class="t" style="left:942px;top:554.40px;font-size:12px;line-height:16px;font-weight:400;color:#3a3a3a;transform:scaleX(0.9823);">08/01/2024</span>
<span class="t" style="left:1057px;top:554.40px;font-size:12px;line-height:16px;font-weight:400;color:#3a3a3a;transform:scaleX(0.9823);">09/10/2024</span>
<span class="t" style="left:1187px;top:555.40px;font-size:11px;line-height:14px;font-weight:700;color:#2e92e6;transform:scaleX(0.9691);">SUSTAIN</span>
<span class="t" style="left:1248px;top:555.40px;font-size:11px;line-height:14px;font-weight:700;color:#e25a66;transform:scaleX(0.8973);">REBUT</span>
<span class="t" style="left:53px;top:606.90px;font-size:12px;line-height:16px;font-weight:400;color:#3a3a3a;transform:scaleX(0.8644);">4652 PARKCLIFF DR,</span>
<span class="t" style="left:53px;top:629.70px;font-size:12px;line-height:16px;font-weight:400;color:#3a3a3a;transform:scaleX(0.8980);">EAGAN, MN 55123-2129</span>
<span class="t" style="left:227px;top:617.80px;font-size:12px;line-height:16px;font-weight:400;color:#3a3a3a;transform:scaleX(0.9065);">Area Challenge</span>
<span class="t" style="left:339.5px;top:621.90px;font-size:10px;line-height:13px;font-weight:400;color:#666;letter-spacing:0.8px;transform:scaleX(0.8305);">--</span>
<span class="t" style="left:412px;top:618.50px;font-size:11px;line-height:14px;font-weight:400;color:#777;transform:scaleX(0.8870);">--</span>
<span class="t" style="left:533px;top:617.80px;font-size:12px;line-height:16px;font-weight:400;color:#3a3a3a;transform:scaleX(0.9362);">1537</span>
<span class="t" style="left:640px;top:617.80px;font-size:12px;line-height:16px;font-weight:400;color:#3a3a3a;transform:scaleX(0.9362);">1981</span>
<span class="t" style="left:738px;top:617.80px;font-size:12px;line-height:16px;font-weight:400;color:#3a3a3a;transform:scaleX(0.9317);">Availability - Service Not Available</span>
<span class="t" style="left:942px;top:617.80px;font-size:12px;line-height:16px;font-weight:400;color:#3a3a3a;transform:scaleX(0.9823);">08/01/2024</span>
<span class="t" style="left:1057px;top:617.80px;font-size:12px;line-height:16px;font-weight:400;color:#3a3a3a;transform:scaleX(0.9823);">09/10/2024</span>
<span class="t" style="left:1187px;top:618.80px;font-size:11px;line-height:14px;font-weight:700;color:#2e92e6;transform:scaleX(0.9691);">SUSTAIN</span>
<span class="t" style="left:1248px;top:618.80px;font-size:11px;line-height:14px;font-weight:700;color:#e25a66;transform:scaleX(0.8973);">REBUT</span>
<svg style="left:354px;top:389px" width="14" height="20" viewBox="0 0 14 20"><path d="M.7 1V16.500L4 13.700L6.300 18.500L8.600 17.500L6.400 12.900H12.300z" fill="#fff" stroke="#1c1c1c" stroke-width="1" stroke-linejoin="miter"/></svg>
</body></html>
